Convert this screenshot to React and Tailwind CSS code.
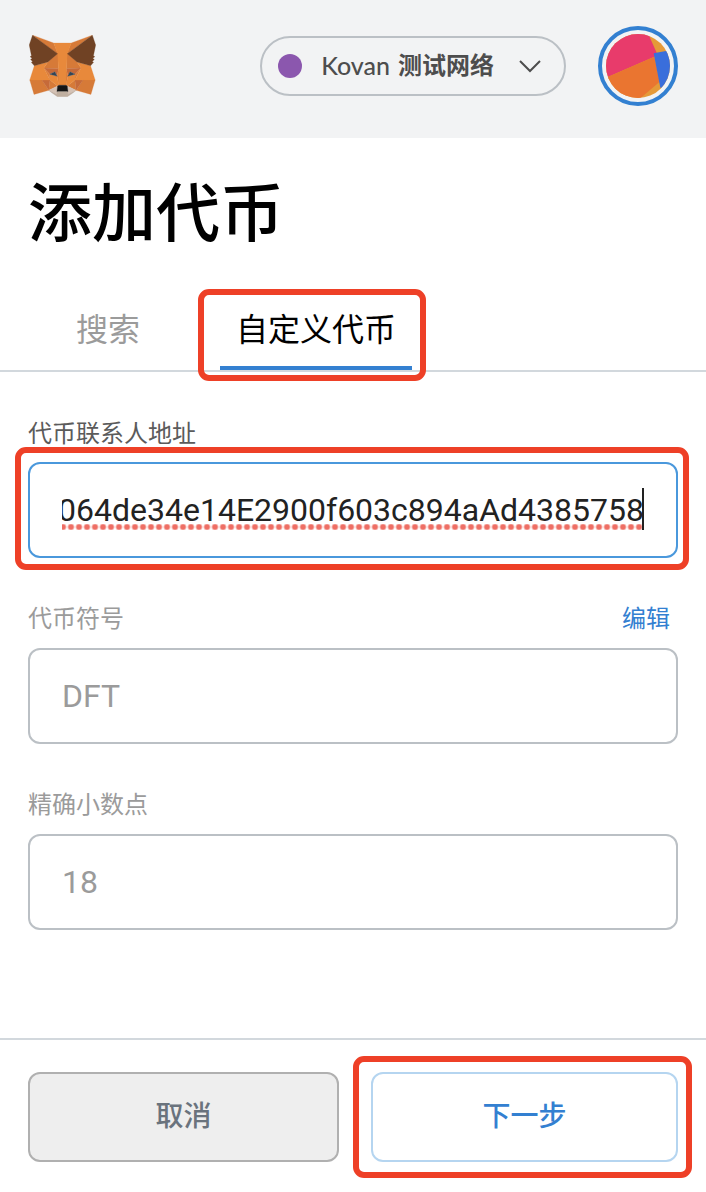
import React, { useEffect, useRef } from 'react';

const foxShapes = [
  { fill: '#d67a38', points: '274.1,35.5 174.6,109.4 193,65.8' },
  { fill: '#d67a38', points: '44.4,35.5 143.1,110.1 125.6,65.8' },
  { fill: '#d67a38', points: '238.3,206.8 211.8,247.4 268.5,263 284.8,207.7' },
  { fill: '#d67a38', points: '33.9,207.7 50.1,263 106.8,247.4 80.3,206.8' },
  { fill: '#d67a38', points: '103.6,138.2 87.8,162.1 144.1,164.6 142.1,104.1' },
  { fill: '#d67a38', points: '214.9,138.2 175.9,103.4 174.6,164.6 230.8,162.1' },
  { fill: '#d67a38', points: '106.8,247.4 140.6,230.9 111.4,208.1' },
  { fill: '#d67a38', points: '177.9,230.9 211.8,247.4 207.1,208.1' },
  { fill: '#d5c2b5', points: '211.8,247.4 177.9,230.9 180.6,253 180.3,262.3' },
  { fill: '#d5c2b5', points: '106.8,247.4 138.3,262.3 138.1,253 140.6,230.9' },
  { fill: '#c66a39', points: '106.8,247.4 111.6,206.8 80.3,207.7' },
  { fill: '#c66a39', points: '207,206.8 211.8,247.4 238.3,207.7' },
  { fill: '#c66a39', points: '230.8,162.1 174.6,164.6 179.8,193.5 188.1,176.1 208.1,185.2' },
  { fill: '#c66a39', points: '110.6,185.2 130.6,176.1 138.8,193.5 144.1,164.6 87.8,162.1' },
  { fill: '#dd7d38', points: '87.8,162.1 111.4,208.1 110.6,185.2' },
  { fill: '#dd7d38', points: '208.1,185.2 207.1,208.1 230.8,162.1' },
  { fill: '#dd7d38', points: '144.1,164.6 138.8,193.5 145.4,227.6 146.9,182.7' },
  { fill: '#dd7d38', points: '174.6,164.6 171.9,182.6 173.1,227.6 179.8,193.5' },
  { fill: '#e8893b', points: '179.8,193.5 173.1,227.6 177.9,230.9 207.1,208.1 208.1,185.2' },
  { fill: '#e8893b', points: '110.6,185.2 111.4,208.1 140.6,230.9 145.4,227.6 138.8,193.5' },
  { fill: '#344555', points: '138.8,193.5 110.6,185.2 130.5,176.1' },
  { fill: '#344555', points: '179.7,193.5 188,176.1 208,185.2' },
  {
    fill: '#bfae9f',
    points:
      '180.3,262.3 180.6,253 178.1,250.8 140.4,250.8 138.1,253 138.3,262.3 106.8,247.4 117.8,256.4 140.1,271.9 178.4,271.9 200.8,256.4 211.8,247.4',
  },
  {
    fill: '#e8893b',
    points: '267.2,153.5 214.9,138.2 230.8,162.1 207.1,208.1 238.3,207.7 284.8,207.7',
  },
  { fill: '#e8893b', points: '103.6,138.2 51.3,153.5 33.9,207.7 80.3,207.7 111.4,208.1 87.8,162.1' },
  {
    fill: '#e8893b',
    points:
      '174.6,164.6 177.9,106.9 193.1,65.8 125.6,65.8 140.6,106.9 144.1,164.6 145.3,182.8 145.4,227.6 173.1,227.6 173.3,182.8',
  },
  {
    fill: '#161616',
    points: '177.9,230.9 173.1,227.6 145.4,227.6 140.6,230.9 138.1,253 140.4,250.8 178.1,250.8 180.6,253',
  },
  {
    fill: '#704224',
    points:
      '278.3,114.2 286.8,73.4 274.1,35.5 177.9,106.9 214.9,138.2 267.2,153.5 278.8,140 273.8,136.4 281.8,129.1 275.6,124.3 283.6,118.2',
  },
  {
    fill: '#704224',
    points:
      '31.8,73.4 40.3,114.2 34.9,118.2 42.9,124.3 36.8,129.1 44.8,136.4 39.8,140 51.3,153.5 103.6,138.2 140.6,106.9 44.4,35.5',
  },
];

const FoxLogo = () => (
  <svg className="ml-px h-[62px] w-[67px]" viewBox="31 35 257 238" aria-label="MetaMask">
    {foxShapes.map((shape) => (
      <polygon
        key={shape.points}
        fill={shape.fill}
        stroke={shape.fill}
        strokeWidth="1"
        strokeLinejoin="round"
        points={shape.points}
      />
    ))}
  </svg>
);

const AccountIcon = () => (
  <svg className="h-16 w-16 rounded-full" viewBox="48 57 192 192" aria-hidden="true">
    <rect x="48" y="57" width="192" height="192" fill="#e59a38" />
    <polygon fill="#e83b6b" points="48,57 175,57 200,113 193,125 48,188" />
    <polygon fill="#ea7530" points="48,188 193,125 209,200 152,249 48,249" />
    <polygon fill="#3a6edb" points="191,115 240,106 240,218 211,218" />
  </svg>
);

// Red frame that sits on top of the step the user should look at
const Highlight = ({ className }) => (
  <span className={`pointer-events-none absolute rounded-[11px] border-6 border-[#ee4027] ${className}`} />
);

const Header = () => (
  <header className="flex items-center justify-between bg-[#f2f3f4] px-7 pt-[26px] pb-8">
    <FoxLogo />
    <div className="flex items-center gap-8">
      <button
        type="button"
        className="flex h-[60px] items-center rounded-full border-2 border-[#bbc0c5] pr-[23px] pl-4 text-2xl font-medium text-[#4d4d4d]"
      >
        <span className="mr-[19px] h-6 w-6 rounded-full bg-[#8b57ae]" />
        <span className="flex items-center gap-2">
          <span className="font-['Lato',sans-serif] text-[25px]">Kovan</span>
          <span className="font-bold">测试网络</span>
        </span>
        <svg className="ml-[25px] h-[14px] w-[22px]" viewBox="0 0 22 14" fill="none" aria-hidden="true">
          <path d="M1 2l10 10L21 2" stroke="#4d4d4d" strokeWidth="2" />
        </svg>
      </button>
      <button
        type="button"
        aria-label="我的账户"
        className="flex h-20 w-20 items-center justify-center rounded-full border-4 border-[#3380d1]"
      >
        <AccountIcon />
      </button>
    </div>
  </header>
);

const Tabs = () => (
  <nav className="mt-[35px] flex gap-16 border-b-2 border-[#d2d8dd] pl-[60px] text-[32px] leading-[48px]">
    <button type="button" className="border-b-4 border-transparent px-4 pt-4 pb-3 text-[#9b9b9b]">
      搜索
    </button>
    <div className="relative">
      <button type="button" className="border-b-4 border-[#3380d1] px-4 pt-4 pb-3 text-black">
        自定义代币
      </button>
      <Highlight className="-top-px -right-3.5 -bottom-[11px] -left-[22px]" />
    </div>
  </nav>
);

const AddressField = () => {
  const inputRef = useRef(null);

  // keep the end of the address in view
  useEffect(() => {
    inputRef.current.scrollLeft = inputRef.current.scrollWidth;
  }, []);

  return (
    <div className="flex flex-col gap-2.5">
      <label htmlFor="address" className="text-2xl leading-9 text-[#5b5b5b]">
        代币联系人地址
      </label>
      <div className="relative">
        <input
          id="address"
          ref={inputRef}
          type="text"
          spellCheck={false}
          defaultValue="064de34e14E2900f603c894aAd4385758"
          className="block h-24 w-full rounded-xl border-2 border-[#4a98dc] px-8 text-[32px] text-[#222222] outline-none"
        />
        <span className="pointer-events-none absolute right-[35px] bottom-7 left-[34px] h-1.5 bg-[radial-gradient(circle,#ee6e64_2px,transparent_4px)] bg-[length:8px_6px] bg-right" />
        <span className="pointer-events-none absolute right-[34px] bottom-7 h-[42px] w-0.5 bg-[#222222]" />
        <Highlight className="-top-[15px] -right-[11px] -bottom-3 -left-[13px]" />
      </div>
    </div>
  );
};

const Field = ({ id, label, value, action }) => (
  <div className="flex flex-col gap-[11px]">
    <div className="flex justify-between text-2xl leading-9">
      <label htmlFor={id} className="text-[#9b9b9b]">
        {label}
      </label>
      {action && (
        <button type="button" className="mr-2 text-[#3380d1]">
          {action}
        </button>
      )}
    </div>
    <input
      id={id}
      type="text"
      defaultValue={value}
      className="block h-24 w-full rounded-xl border-2 border-[#bbc0c5] px-8 text-[32px] text-[#9b9b9b] outline-none"
    />
  </div>
);

const Footer = () => (
  <footer className="flex gap-8 border-t-2 border-[#d2d8dd] px-7 pt-8 pb-[30px] text-[28px] font-medium">
    <button type="button" className="h-[90px] flex-1 rounded-xl border-2 border-[#b0b0b0] bg-[#eeeeee] text-[#6a737d]">
      取消
    </button>
    <div className="relative flex flex-1">
      <button type="button" className="h-[90px] flex-1 rounded-xl border-2 border-[#b5d5f0] text-[#3380d1]">
        下一步
      </button>
      <Highlight className="-top-4 -right-3.5 -bottom-4 -left-[18px]" />
    </div>
  </footer>
);

const App = () => {
  return (
    <div className="flex min-h-screen flex-col bg-white font-['Roboto','Noto_Sans_CJK_SC',sans-serif]" lang="zh-CN">
      <Header />
      <main className="flex-1">
        <h1 className="px-7 pt-[37px] text-[64px] leading-[80px] font-medium text-black">添加代币</h1>
        <Tabs />
        <form className="flex flex-col gap-[43px] px-7 pt-11 pb-10">
          <AddressField />
          <Field id="symbol" label="代币符号" value="DFT" action="编辑" />
          <Field id="decimals" label="精确小数点" value="18" />
        </form>
      </main>
      <Footer />
    </div>
  );
};

export default App;
